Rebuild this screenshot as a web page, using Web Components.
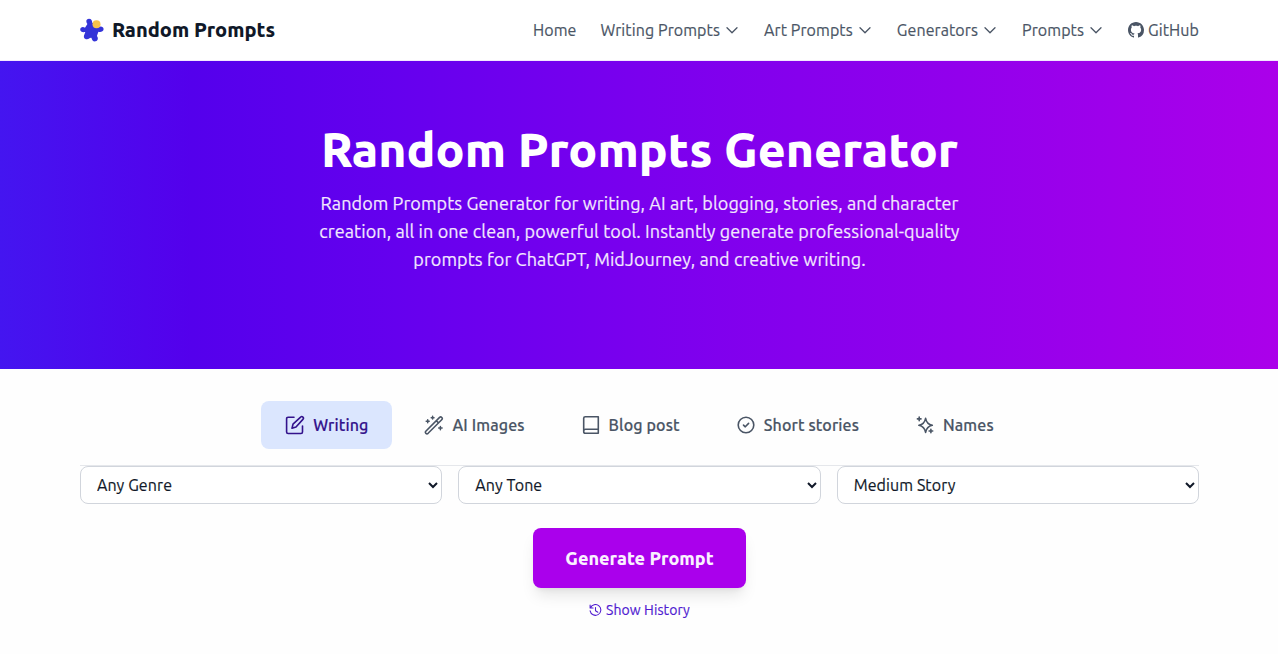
<!DOCTYPE html>
<html lang="en">
<head>
<meta charset="utf-8">
<title>Random Prompts</title>
<style>
    body {
        margin: 0;
        background: #fefefe;
        color: #101828;
        font: 400 16px/24px Ubuntu, "Noto Sans", sans-serif;
        letter-spacing: .09px;
        -webkit-text-stroke: .18px;
        overflow: hidden;
    }
</style>
</head>
<body>
<site-header>
    <nav-item>Home</nav-item>
    <nav-item menu>Writing Prompts</nav-item>
    <nav-item menu>Art Prompts</nav-item>
    <nav-item menu>Generators</nav-item>
    <nav-item menu>Prompts</nav-item>
    <nav-item icon="github">GitHub</nav-item>
</site-header>
<page-hero>
    <span slot="title">Random Prompts Generator</span>
    Random Prompts Generator for writing, AI art, blogging, stories, and character creation, all in one clean, powerful tool. Instantly generate professional-quality prompts for ChatGPT, MidJourney, and creative writing.
</page-hero>
<prompt-form>
    <tab-item slot="tabs" icon="edit" active>Writing</tab-item>
    <tab-item slot="tabs" icon="wand">AI Images</tab-item>
    <tab-item slot="tabs" icon="book">Blog post</tab-item>
    <tab-item slot="tabs" icon="check">Short stories</tab-item>
    <tab-item slot="tabs" icon="sparkles">Names</tab-item>
    <select-box label="Any Genre"></select-box>
    <select-box label="Any Tone"></select-box>
    <select-box label="Medium Story"></select-box>
    <action-button slot="actions">Generate Prompt</action-button>
    <history-link slot="actions">Show History</history-link>
</prompt-form>

<script>
'use strict';

const icons = {
    chevron: ['0 0 16 16', '<path d="M3 5.8 8 10.7 13 5.8" stroke-width="1.3"/>'],
    github: ['0 0 16 16', '<path fill="currentColor" stroke="none" d="M8 0C3.58 0 0 3.58 0 8c0 3.54 2.29 6.53 5.47 7.59.4.07.55-.17.55-.38 0-.19-.01-.82-.01-1.49-2.01.37-2.53-.49-2.69-.94-.09-.23-.48-.94-.82-1.13-.28-.15-.68-.52-.01-.53.63-.01 1.08.58 1.23.82.72 1.21 1.87.87 2.33.66.07-.52.28-.87.51-1.07-1.78-.2-3.64-.89-3.64-3.95 0-.87.31-1.59.82-2.15-.08-.2-.36-1.02.08-2.12 0 0 .67-.21 2.2.82.64-.18 1.32-.27 2-.27s1.36.09 2 .27c1.53-1.04 2.2-.82 2.2-.82.44 1.1.16 1.92.08 2.12.51.56.82 1.27.82 2.15 0 3.07-1.87 3.75-3.65 3.95.29.25.54.73.54 1.48 0 1.07-.01 1.93-.01 2.2 0 .21.15.46.55.38A8.01 8.01 0 0 0 16 8c0-4.42-3.58-8-8-8Z"/>'],
    edit: ['0 0 20 20', '<path d="M9 2.3H3.1Q1.6 2.3 1.6 3.8V17Q1.6 18.5 3.1 18.5H16Q17.5 18.5 17.5 17V11"/><path d="m7 13.2 1-4 7.6-7.1a1.6 1.6 0 0 1 2.3 2.3l-6.9 7.6Z"/>'],
    wand: ['0 0 20 20', '<path d="M1.8 16.2 15.6 2.4Q16.7 1.4 17.8 2.5T17.7 4.7L4.1 18.3Q3 19.3 1.9 18.3T1.8 16.2ZM12.3 5.7l2.2 2.2"/><path d="M3.7 4.8v3M2.2 6.3h3M8.6 1.3v2.8M7.2 2.7h2.8M16.4 11.4v3.4M14.7 13.1h3.4" stroke-width="1.5"/>'],
    book: ['0 0 20 20', '<path d="M4.3 1.7H17.3V18.3H4.3Q2.7 18.3 2.7 16.5V3.3Q2.7 1.7 4.3 1.7ZM17.3 14.3H4.5Q2.7 14.3 2.7 16.2"/>'],
    check: ['0 0 20 20', '<circle cx="10" cy="10" r="7.8"/><path d="m7.5 10.1 1.8 1.7 3.3-3.4"/>'],
    sparkles: ['0 0 20 20', '<path d="M10.6 3.3Q11.7 9.2 17.3 10.3 11.7 11.5 10.6 17.4 9.5 11.5 3.9 10.3 9.5 9.2 10.6 3.3Z"/><path d="M4.2 2.1v3.6M2.4 3.9H6M15.9 14.2v3.6M14.1 16h3.6"/>'],
    history: ['0 0 14 14', '<path d="M1.2 1.2v3.2h3.2M1.5 4.3A5.8 5.8 0 1 1 1.2 7.4M7 3.7v3.5l2.5 1.7" stroke-width="1.15"/>']
};

const icon = (name, size) =>
    `<svg width="${size}" height="${size}" viewBox="${icons[name][0]}" fill="none" stroke="currentColor" stroke-width="1.6" stroke-linecap="round" stroke-linejoin="round">${icons[name][1]}</svg>`;

class BaseElement extends HTMLElement {
    constructor() {
        super();

        this.attachShadow({ mode: 'open' });
    }

    get icon() {
        return this.getAttribute('icon');
    }
}

customElements.define('site-header', class extends BaseElement {
    connectedCallback() {
        this.shadowRoot.innerHTML = `
            <style>
                :host {
                    display: flex; align-items: center; justify-content: space-between;
                    height: 60px; padding: 0 79px 0 80px;
                    border-bottom: 1px solid #f3e8ff; background: #fff;
                }
                .brand {
                    display: flex; align-items: center; gap: 8px;
                    font-size: 20px; font-weight: 800; letter-spacing: 0; -webkit-text-stroke: 0;
                }
                nav { display: flex; gap: 24px; color: #4a5565; }
                svg { display: block; }
            </style>
            <div class="brand">
                <svg width="24" height="24" viewBox="0 0 24 24">
                    <path fill="#3434d8" d="M7.4 6C5.4 2.8 6.5.9 8.9.7c2.5 0 3.4 1.8 3.2 3.9l6.4 4.6c2-1.5 5.2-.6 5.1 2.1-.2 2.7-3.2 3-5.2 2.5l-1.5 4.2c1.6 1.8 1.2 4.8-1.2 5.3-2.6.5-3.7-1.3-4.2-3.4-2.2-.3-2.2 1.4-4.6 1.4-2.8 0-3.6-2.3-2.6-4.5l1-2.7C2.6 14.6.3 14 .2 11.6c0-2.6 3-3.2 4.8-1.8Z"/>
                    <circle cx="16.5" cy="6.2" r="4" fill="#f7c34b"/>
                </svg>
                <span>Random Prompts</span>
            </div>
            <nav><slot></slot></nav>`;
    }
});

customElements.define('nav-item', class extends BaseElement {
    connectedCallback() {
        this.shadowRoot.innerHTML = `
            <style>
                :host { display: flex; align-items: center; gap: 4px; }
            </style>
            ${this.icon ? icon(this.icon, 16) : ''}
            <slot></slot>
            ${this.hasAttribute('menu') ? icon('chevron', 16) : ''}`;
    }
});

customElements.define('page-hero', class extends BaseElement {
    connectedCallback() {
        this.shadowRoot.innerHTML = `
            <style>
                :host {
                    display: flex; flex-direction: column; align-items: center;
                    box-sizing: border-box; height: 308px; padding: 64px 0 0 1px;
                    background: linear-gradient(to right, #4415f0, #5400ec 15%, #6500ee 31%, #7a00ee 50%, #9200ec 75%, #ab00ea);
                    color: #f3e8ff;
                }
                h1 {
                    margin: 0; color: #fff; font-size: 48px; line-height: 48px;
                    font-weight: 800; letter-spacing: 0; -webkit-text-stroke: 0;
                }
                p { width: 672px; margin: 16px 0 0; font-size: 18px; line-height: 28px; text-align: center; }
            </style>
            <h1><slot name="title"></slot></h1>
            <p><slot></slot></p>`;
    }
});

customElements.define('prompt-form', class extends BaseElement {
    connectedCallback() {
        this.shadowRoot.innerHTML = `
            <style>
                :host { display: block; padding: 32px 79px 0 80px; }
                .tabs { display: flex; justify-content: center; gap: 8px; padding-bottom: 16px; border-bottom: 1px solid #e5e7eb; }
                .fields { display: grid; grid-template-columns: repeat(3, 1fr); gap: 16px; }
                .actions { display: flex; flex-direction: column; align-items: center; gap: 12px; margin-top: 24px; }
            </style>
            <div class="tabs"><slot name="tabs"></slot></div>
            <div class="fields"><slot></slot></div>
            <div class="actions"><slot name="actions"></slot></div>`;
    }
});

customElements.define('tab-item', class extends BaseElement {
    connectedCallback() {
        this.shadowRoot.innerHTML = `
            <style>
                :host {
                    display: flex; align-items: center; gap: 8px;
                    height: 48px; padding: 0 24px; border-radius: 8px;
                    color: #4a5565; font-weight: 500; letter-spacing: .12px;
                }
                :host([active]) { background: #dbe6fe; color: #33128c; }
            </style>
            ${icon(this.icon, 20)}
            <slot></slot>`;
    }
});

customElements.define('select-box', class extends BaseElement {
    connectedCallback() {
        this.shadowRoot.innerHTML = `
            <style>
                :host { display: block; }
                select {
                    display: block; box-sizing: border-box; width: 100%; height: 38px; padding: 0 0 0 12px;
                    border: 1px solid #d1d5dc; border-radius: 8px; background: #fff;
                    color: inherit; font: inherit; letter-spacing: inherit;
                }
            </style>
            <select><option>${this.getAttribute('label')}</option></select>`;
    }
});

customElements.define('action-button', class extends BaseElement {
    connectedCallback() {
        this.shadowRoot.innerHTML = `
            <style>
                :host { display: block; }
                button {
                    display: block; height: 60px; padding: 0 32px; border: 0; border-radius: 8px;
                    background: #aa00ec; color: #faf0ff; font: inherit; font-size: 18px; font-weight: 800;
                    -webkit-text-stroke: 0;
                    box-shadow: 0 10px 15px -3px #0000001a, 0 4px 6px -4px #0000001a;
                }
            </style>
            <button><slot></slot></button>`;
    }
});

customElements.define('history-link', class extends BaseElement {
    connectedCallback() {
        this.shadowRoot.innerHTML = `
            <style>
                :host { display: flex; align-items: center; gap: 4px; color: #4f1bd0; font-size: 14px; line-height: 20px; }
            </style>
            ${icon('history', 13)}
            <slot></slot>`;
    }
});
</script>
</body>
</html>
